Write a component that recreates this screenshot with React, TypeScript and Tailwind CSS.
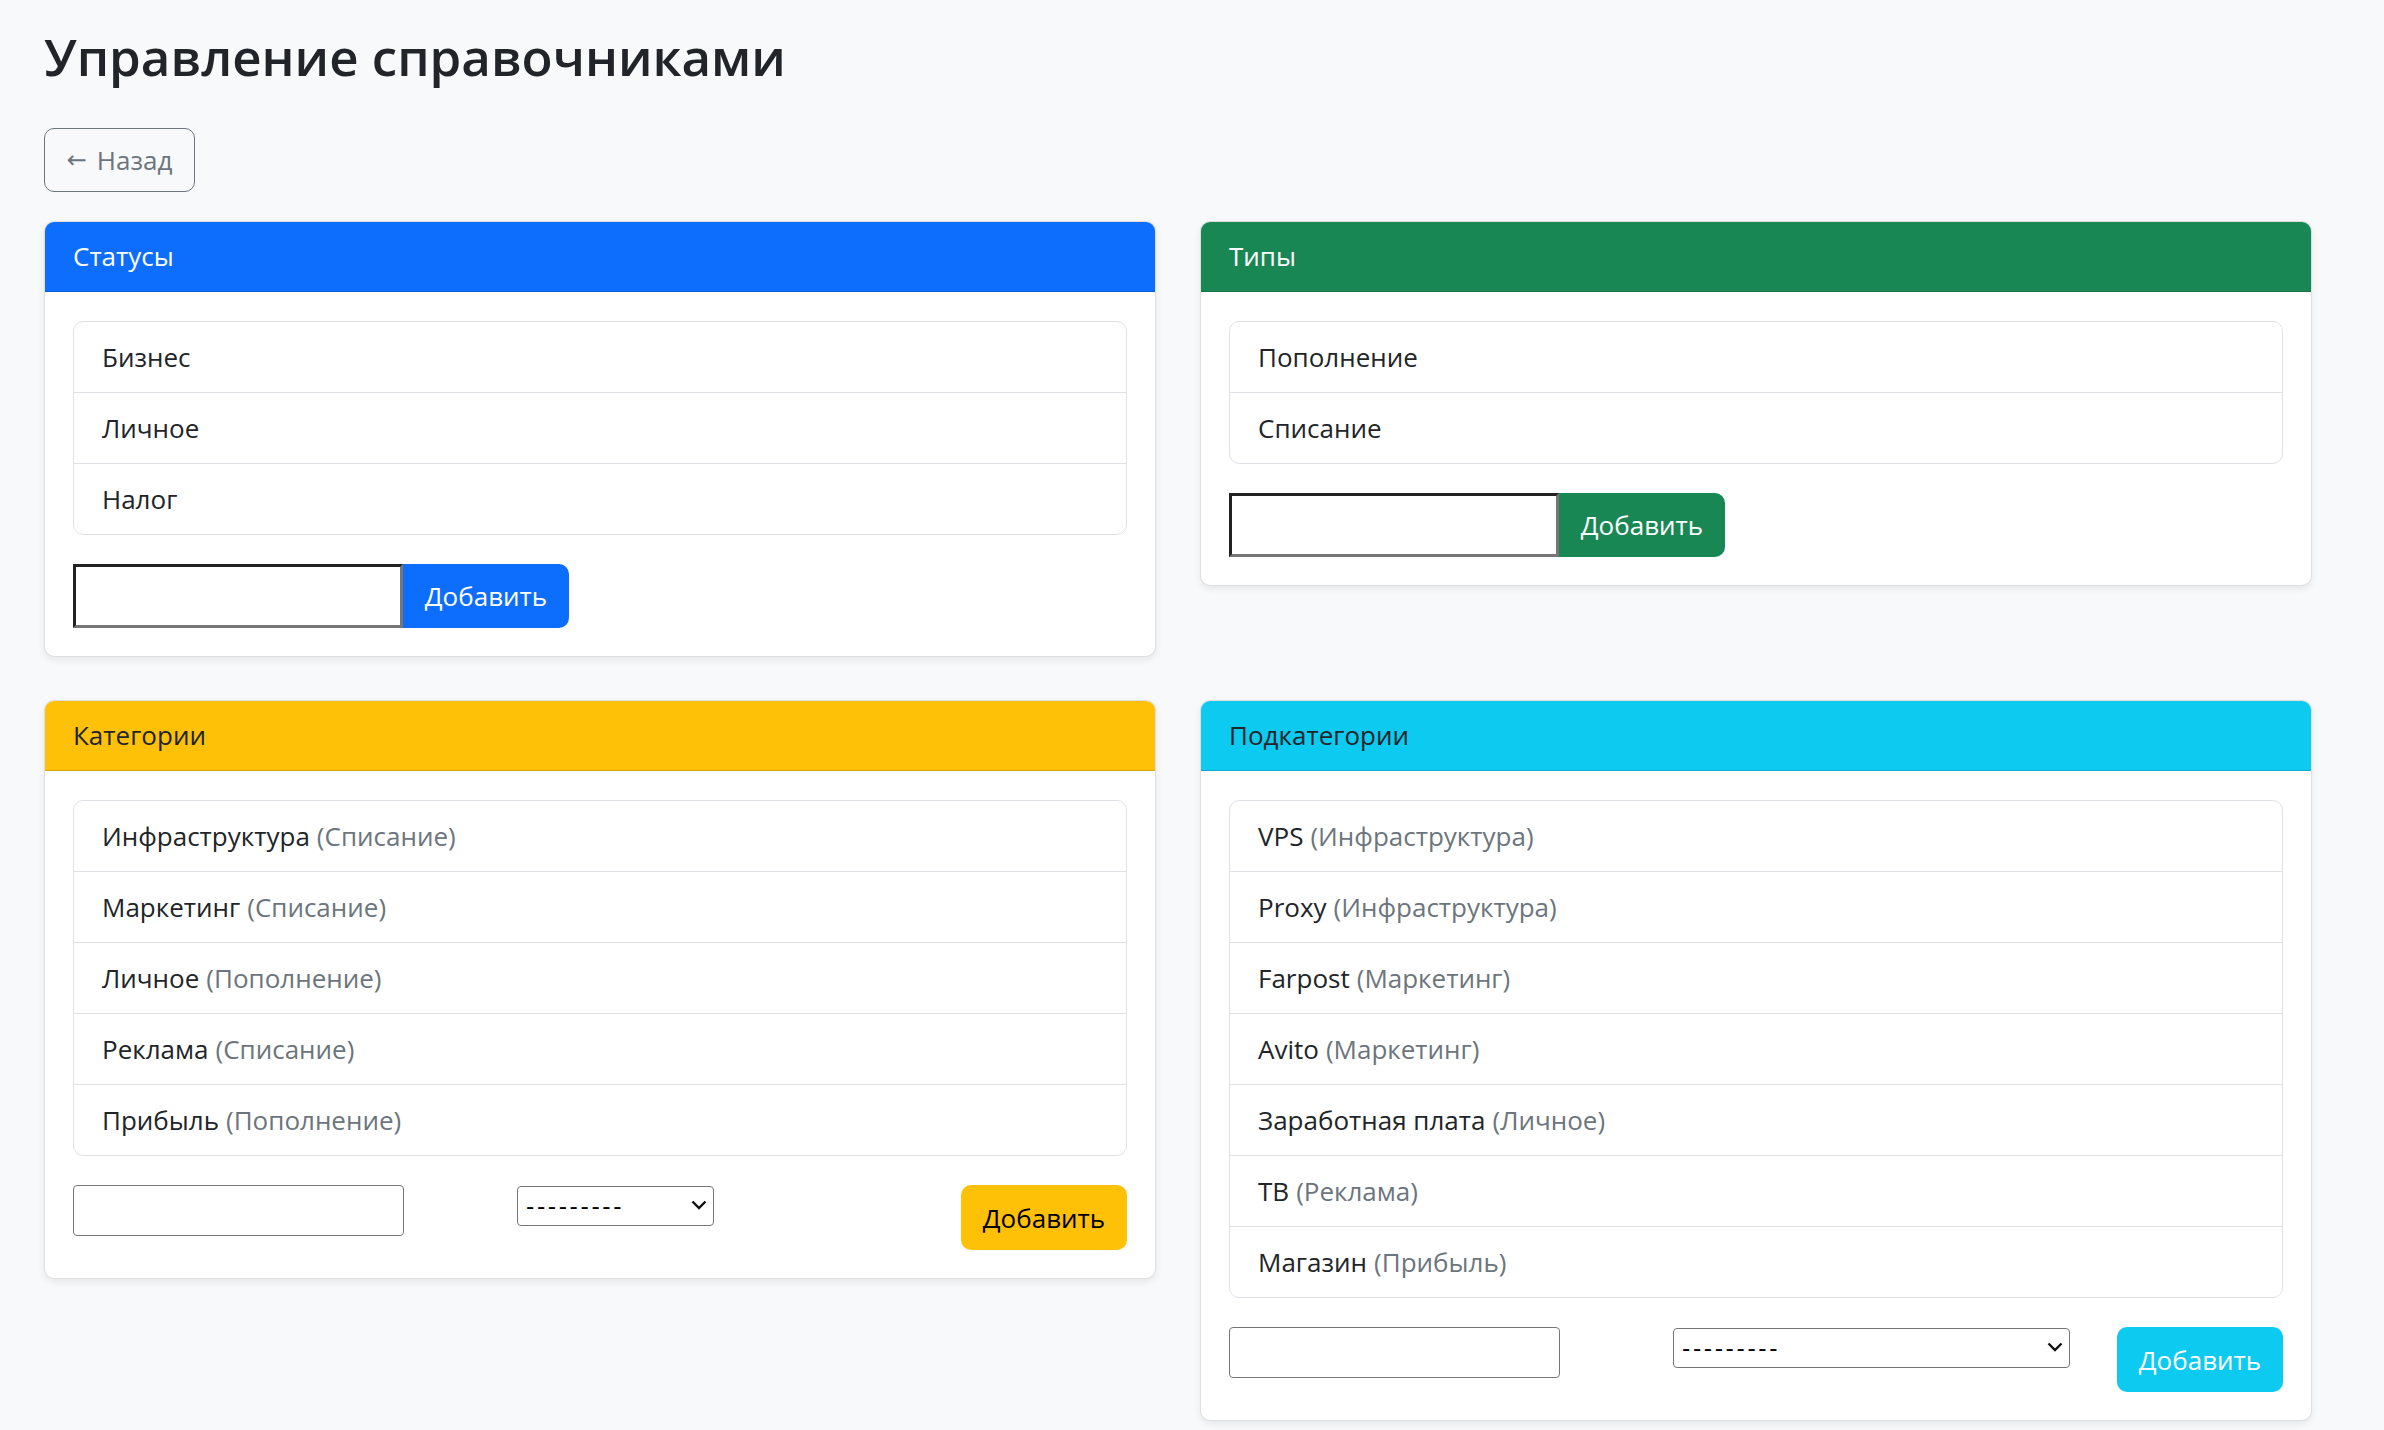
import React from "react";

type Row = { name: string; parent?: string };

const statuses: Row[] = [{ name: "Бизнес" }, { name: "Личное" }, { name: "Налог" }];
const types: Row[] = [{ name: "Пополнение" }, { name: "Списание" }];
const categories: Row[] = [
  { name: "Инфраструктура", parent: "Списание" },
  { name: "Маркетинг", parent: "Списание" },
  { name: "Личное", parent: "Пополнение" },
  { name: "Реклама", parent: "Списание" },
  { name: "Прибыль", parent: "Пополнение" },
];
const subcategories: Row[] = [
  { name: "VPS", parent: "Инфраструктура" },
  { name: "Proxy", parent: "Инфраструктура" },
  { name: "Farpost", parent: "Маркетинг" },
  { name: "Avito", parent: "Маркетинг" },
  { name: "Заработная плата", parent: "Личное" },
  { name: "ТВ", parent: "Реклама" },
  { name: "Магазин", parent: "Прибыль" },
];

function Card({
  title,
  headerClass,
  children,
}: {
  title: string;
  headerClass: string;
  children: React.ReactNode;
}) {
  return (
    <div className="overflow-hidden rounded-[10px] border border-black/[0.125] bg-white shadow-[0_3px_7px_rgba(0,0,0,0.075)]">
      <div className={`flex h-[70px] items-center border-b border-black/[0.15] px-[28px] ${headerClass}`}>
        {title}
      </div>
      <div className="px-[28px] pt-[29px] pb-[28px]">{children}</div>
    </div>
  );
}

function List({ rows }: { rows: Row[] }) {
  return (
    <div className="overflow-hidden rounded-[10px] border border-[#dee2e6]">
      {rows.map((r, i) => (
        <div
          key={r.name + i}
          className={`flex items-center px-[28px] pt-[1px] text-[#212529] ${i > 0 ? "h-[71px] border-t border-[#dee2e6]" : "h-[70px]"}`}
        >
          <span>{r.name}</span>
          {r.parent && <span className="ml-[7px] text-[#6c757d]">({r.parent})</span>}
        </div>
      ))}
    </div>
  );
}

function InlineAdd({ btnClass }: { btnClass: string }) {
  return (
    <div className="mt-[29px] flex h-[64px]">
      <input
        type="text"
        className="h-full w-[330px] border-[3px] border-t-[#222] border-l-[#222] border-r-[#767676] border-b-[#767676] bg-white outline-none"
      />
      <button className={`h-full w-[166px] rounded-r-[10px] pt-[1px] ${btnClass}`}>Добавить</button>
    </div>
  );
}

function Select({ width }: { width: string }) {
  return (
    <div className={`relative h-[40px] ${width}`}>
      <select className="h-full w-full appearance-none rounded-[4px] border border-[#767676] bg-white pl-[8px] font-['DejaVu_Sans',sans-serif] text-[23px] tracking-[2.6px] text-black outline-none">
        <option>---------</option>
      </select>
      <svg
        className="pointer-events-none absolute top-[15px] right-[7px]"
        width="16"
        height="10"
        viewBox="0 0 16 10"
        fill="none"
      >
        <polyline points="1.5,1.5 8,8 14.5,1.5" stroke="#111" strokeWidth="2.4" />
      </svg>
    </div>
  );
}

function FormRow({ selectWidth, btnClass }: { selectWidth: string; btnClass: string }) {
  return (
    <div className="mt-[29px] grid grid-cols-[1fr_1fr_auto] items-start gap-x-[14px]">
      <div>
        <input
          type="text"
          className="h-[51px] w-[331px] rounded-[4px] border border-[#767676] bg-white outline-none"
        />
      </div>
      <div>
        <Select width={selectWidth} />
      </div>
      <button className={`h-[65px] w-[166px] rounded-[10px] pt-[1px] ${btnClass}`}>Добавить</button>
    </div>
  );
}

export default function App() {
  return (
    <div className="min-h-screen bg-[#f8f9fa] px-[44px] pt-[25px] pb-[12px] font-['Open_Sans',sans-serif] text-[26px] text-[#212529]">
      <h1 className="text-[51px] leading-[62px] font-semibold text-[#212529]">Управление справочниками</h1>

      <button className="mt-[41px] flex h-[64px] w-[151px] items-center justify-center rounded-[10px] border border-[#6c757d] text-[26px] text-[#6c757d]">
        <span className="mr-[10px] font-['DejaVu_Sans',sans-serif] text-[24px] leading-none">←</span>
        <span>Назад</span>
      </button>

      <div className="mt-[29px] grid grid-cols-[1112px_1112px] items-start gap-x-[44px] gap-y-[43px]">
        <Card title="Статусы" headerClass="bg-[#0d6efd] text-white">
          <List rows={statuses} />
          <InlineAdd btnClass="bg-[#0d6efd] text-white" />
        </Card>

        <Card title="Типы" headerClass="bg-[#198754] text-white">
          <List rows={types} />
          <InlineAdd btnClass="bg-[#198754] text-white" />
        </Card>

        <Card title="Категории" headerClass="bg-[#ffc107] text-[#212529]">
          <List rows={categories} />
          <FormRow selectWidth="w-[197px]" btnClass="bg-[#ffc107] text-black" />
        </Card>

        <Card title="Подкатегории" headerClass="bg-[#0dcaf0] text-[#212529]">
          <List rows={subcategories} />
          <FormRow selectWidth="w-[397px]" btnClass="bg-[#0dcaf0] text-white" />
        </Card>
      </div>
    </div>
  );
}
